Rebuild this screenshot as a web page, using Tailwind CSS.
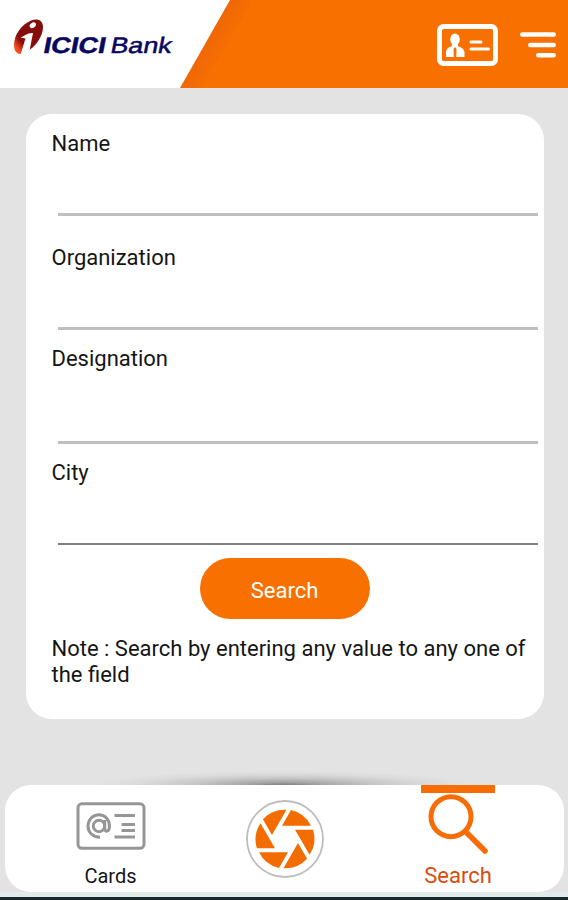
<!DOCTYPE html>
<html lang="en">
<head>
    <meta charset="UTF-8" />
    <meta name="viewport" content="width=device-width, initial-scale=1.0"/>
    <title>ICICI Bank - Search Cards</title>
    <script src="https://cdn.jsdelivr.net/npm/@tailwindcss/browser@4"></script>
</head>
<body class="flex h-[900px] w-[568px] flex-col overflow-hidden bg-[#e3e3e3] font-['Roboto',sans-serif] text-[22px] text-[#151515]">
<!-- Header -->
<header class="relative flex h-[88px] shrink-0 items-center justify-end bg-[#f77000]">
    <svg class="absolute left-0 top-0" width="250" height="88" viewBox="0 0 250 88">
        <defs>
            <linearGradient id="edge" gradientUnits="userSpaceOnUse" x1="204" y1="44" x2="226" y2="57">
                <stop offset="0" stop-color="#ef6706"/>
                <stop offset="1" stop-color="#f77000"/>
            </linearGradient>
            <linearGradient id="swirl" gradientUnits="userSpaceOnUse" x1="15" y1="46" x2="26" y2="38">
                <stop offset="0" stop-color="#f5501a"/>
                <stop offset="0.3" stop-color="#c42a12"/>
                <stop offset="0.55" stop-color="#870c0c"/>
            </linearGradient>
        </defs>
        <path d="M0 0H250V6L201 88H0Z" fill="url(#edge)"/>
        <path d="M0 0H230L180 88H0Z" fill="#fff"/>
        <path d="M43 27C43 20 37 18 31 20.5C21 25 14 35 14 45C14 50 16 53.5 20 54C32 52 43 38 43 27Z" fill="url(#swirl)"/>
        <ellipse cx="32.8" cy="25.3" rx="3.4" ry="2.5" transform="rotate(-35 32.8 25.3)" fill="#fff"/>
        <path d="M20.5 37.5C24 36.5 26 33 33 33L28.5 56H20L25.5 38.5Z" fill="#fff"/>
        <g fill="#07075f" font-family="Liberation Sans, Arial, sans-serif" font-size="22.5" stroke="#07075f" stroke-width=".5" transform="translate(0 53) skewX(-11)">
            <text x="42.5" y="0" font-weight="700" textLength="62" lengthAdjust="spacingAndGlyphs">ICICI</text>
            <text x="109.5" y="0" textLength="61" lengthAdjust="spacingAndGlyphs">Bank</text>
        </g>
    </svg>
    <svg class="mr-[22px] mt-px" width="62" height="44" viewBox="0 0 62 44" fill="#fff">
        <rect x="3.5" y="3.5" width="56" height="37" rx="4" fill="none" stroke="#fff" stroke-width="5"/>
        <ellipse cx="19" cy="16.3" rx="4.8" ry="5.9"/>
        <path d="M16 19H22V23L25 24.5Q28.5 26 28.5 30V34H20.3L20.5 26L19 24L17.5 26L17.8 34H10V30Q10 26 12.5 24.5L16 23Z"/>
        <path d="M35 19H45M35 26H52.5" stroke="#fff" stroke-width="3" stroke-linecap="round"/>
    </svg>
    <svg class="mr-3 mt-[2px]" width="36" height="28" viewBox="0 0 36 28" fill="none" stroke="#fff" stroke-width="4.5" stroke-linecap="round">
        <path d="M2.3 3.5H33.7M10.3 14H33.7M18.3 24.2H33.7"/>
    </svg>
</header>

<!-- Search form -->
<main class="ml-[25.5px] mr-[24.5px] mt-[26px] flex h-[605px] shrink-0 flex-col rounded-[26px] bg-white pl-[26px] pr-[6px] pt-[17px]">
    <div class="h-[114px]">
        <div class="h-[82px] leading-[26px]">Name</div>
        <div class="ml-[6px] h-[3px] bg-[#bfbfbf]"></div>
    </div>
    <div class="h-[101px]">
        <div class="h-[82px] leading-[26px]">Organization</div>
        <div class="ml-[6px] h-[3px] bg-[#bfbfbf]"></div>
    </div>
    <div class="h-[114px]">
        <div class="h-[95px] leading-[26px]">Designation</div>
        <div class="ml-[6px] h-[3px] bg-[#bfbfbf]"></div>
    </div>
    <div class="h-[98px]">
        <div class="h-[83px] leading-[26px]">City</div>
        <div class="ml-[6px] h-[2px] bg-[#808080]"></div>
    </div>
    <button class="ml-[148px] h-[61px] w-[170px] shrink-0 rounded-full bg-[#f77000] pt-[3px] text-white">Search</button>
    <p class="mt-[17px] leading-[26px]">Note : Search by entering any value to any one of<br>the field</p>
</main>

<!-- Bottom navigation -->
<div class="flex h-[65.5px] shrink-0 items-end justify-center">
    <div class="h-[14px] w-[380px] bg-[radial-gradient(ellipse_50%_100%_at_50%_100%,#808080_0%,#a8a8a8_22%,#c6c6c6_48%,#dadada_75%,#e3e3e3_100%)]"></div>
</div>
<nav class="ml-[5px] mr-1 flex h-[107.5px] shrink-0 rounded-[26px] bg-white">
    <div class="flex w-[211px] flex-col items-center pt-[17px]">
        <svg width="70" height="48" viewBox="0 0 70 48" fill="none" stroke="#969696" stroke-width="3">
            <rect x="2" y="1.8" width="66" height="44.5" rx="4"/>
            <circle cx="23" cy="24" r="5.7"/>
            <path d="M28.7 18V26C28.7 31 33.5 30 33.5 24C33.5 17.7 29 12.7 23 12.7C16.8 12.7 12 17.7 12 24C12 30.3 16.8 35.2 24 35.2"/>
            <path d="M38.5 13.5H59M45.5 22.5H59M45.5 28.5H59M38.5 35H59"/>
        </svg>
        <span class="mt-[14px] text-[20px] leading-6">Cards</span>
    </div>
    <div class="flex w-[137px] justify-center pt-[14px]">
        <svg width="80" height="80" viewBox="-40 -40 80 80">
            <circle r="38" fill="#fff" stroke="#bdbdbd" stroke-width="1.8"/>
            <g fill="#f26c00">
                <path id="blade" d="M6 -29A29.6 29.6 0 0 1 26 -13.3H-3Z"/>
                <use href="#blade" transform="rotate(60)"/>
                <use href="#blade" transform="rotate(120)"/>
                <use href="#blade" transform="rotate(180)"/>
                <use href="#blade" transform="rotate(240)"/>
                <use href="#blade" transform="rotate(300)"/>
            </g>
        </svg>
    </div>
    <div class="ml-[68px] flex w-[74px] flex-col items-center">
        <div class="h-2 w-full bg-[#f76c05]"></div>
        <svg width="62" height="62" viewBox="0 0 62 62" fill="none" stroke="#f76c05">
            <circle cx="24" cy="23.7" r="20" stroke-width="5"/>
            <path d="M39 39L58 58" stroke-width="5.5" stroke-linecap="round"/>
        </svg>
        <span class="mt-[9.5px] leading-6 text-[#d94c10]">Search</span>
    </div>
</nav>
<footer class="mt-auto h-2 shrink-0 border-b-[3px] border-[#17282b] bg-[#e2eaea]"></footer>
</body>
</html>
